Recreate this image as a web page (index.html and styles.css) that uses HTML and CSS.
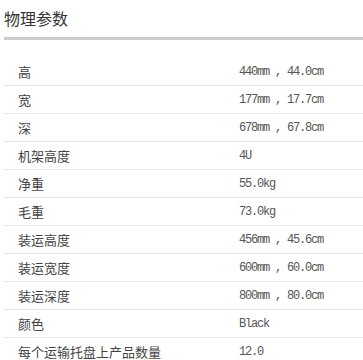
FILE: index.html
```html
<!DOCTYPE html>
<html>
<head>
<meta charset="utf-8">
<link rel="stylesheet" href="styles.css">
</head>
<body>
<div class="panel">
  <h2 class="title">物理参数</h2>
  <div class="specs">
    <div class="row"><span class="label">高</span><span class="value">440mm , 44.0cm</span></div>
    <div class="row"><span class="label">宽</span><span class="value">177mm , 17.7cm</span></div>
    <div class="row"><span class="label">深</span><span class="value">678mm , 67.8cm</span></div>
    <div class="row"><span class="label">机架高度</span><span class="value">4U</span></div>
    <div class="row"><span class="label">净重</span><span class="value">55.0kg</span></div>
    <div class="row"><span class="label">毛重</span><span class="value">73.0kg</span></div>
    <div class="row"><span class="label">装运高度</span><span class="value">456mm , 45.6cm</span></div>
    <div class="row"><span class="label">装运宽度</span><span class="value">600mm , 60.0cm</span></div>
    <div class="row"><span class="label">装运深度</span><span class="value">800mm , 80.0cm</span></div>
    <div class="row"><span class="label">颜色</span><span class="value">Black</span></div>
    <div class="row"><span class="label">每个运输托盘上产品数量</span><span class="value">12.0</span></div>
  </div>
</div>
</body>
</html>
```

FILE: styles.css
```css
html, body {
  margin: 0;
  padding: 0;
  background: #ffffff;
  overflow: hidden;
}
.panel {
  padding-left: 4px;
  font-family: "Noto Sans CJK SC", "Liberation Sans", sans-serif;
}
.title {
  margin: 0;
  padding-top: 8px;
  padding-bottom: 9px;
  font-size: 16px;
  line-height: 20px;
  font-weight: normal;
  color: #333333;
  border-bottom: 3px solid #cccccc;
}
.specs {
  margin-top: 18px;
}
.row {
  display: grid;
  grid-template-columns: 235px 1fr;
  align-items: center;
  height: 27px;
  border-bottom: 1px solid #e6e6e6;
}
.label {
  padding-left: 14px;
  font-size: 13px;
  color: #444444;
  white-space: nowrap;
}
.value {
  font-family: "Liberation Mono", monospace;
  font-size: 12px;
  letter-spacing: -1.2px;
  color: #555555;
  white-space: pre;
}
```
